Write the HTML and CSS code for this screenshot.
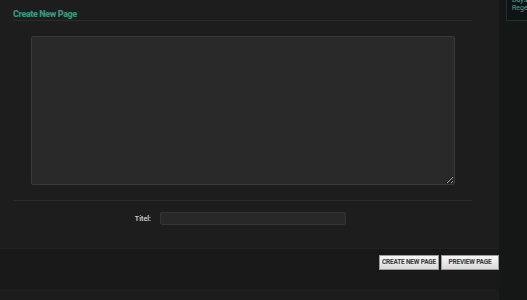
FILE: index.html
```
<!DOCTYPE html>
<html>
<head>
<meta charset="utf-8">
<link rel="stylesheet" href="styles.css">
</head>
<body>
<div class="layout">
  <div class="main">
    <div class="section">
      <h2 class="title">Create New Page</h2>
      <div class="editor-wrap">
        <textarea class="editor"></textarea>
      </div>
      <div class="form-row">
        <label class="label">Titel:</label>
        <input class="input" type="text">
      </div>
    </div>
    <div class="footer">
      <button class="btn btn-create">CREATE NEW PAGE</button>
      <button class="btn btn-preview">PREVIEW PAGE</button>
    </div>
    <div class="bottom"></div>
  </div>
  <div class="side">
    <div class="side-box">
      <div class="side-line first">Days</div>
      <div class="side-line">Regel</div>
    </div>
  </div>
</div>
</body>
</html>
```
FILE: styles.css
```
html, body {
  margin: 0;
  padding: 0;
  background: #171717;
  height: 300px;
  overflow: hidden;
}
.layout {
  display: flex;
  height: 300px;
}
.main {
  width: 499px;
  display: flex;
  flex-direction: column;
  background: #1d1d1d;
}
.section {
  padding: 0 27px 0 13px;
  height: 249px;
  border-bottom: 1px solid #222;
  box-sizing: border-box;
}
.title {
  margin: 0;
  height: 21px;
  box-sizing: border-box;
  padding-top: 9px;
  border-bottom: 1px solid #2a2a2a;
  font-family: "Roboto", sans-serif;
  font-weight: 900;
  font-size: 9px;
  letter-spacing: -0.4px;
  line-height: 10px;
  color: #3b937f;
}
.editor-wrap {
  padding: 15px 0 15px 18px;
  border-bottom: 1px solid #2c2c2c;
}
.editor {
  display: block;
  width: 424px;
  height: 149px;
  box-sizing: border-box;
  margin: 0;
  background: #292929;
  border: 1px solid #3a3a3a;
  border-radius: 2px;
  resize: both;
  outline: none;
}
.form-row {
  display: flex;
  align-items: center;
  padding-top: 11px;
}
.label {
  width: 138px;
  text-align: right;
  font-family: "Roboto", sans-serif;
  font-weight: bold;
  font-size: 7px;
  color: #c8c8c8;
  margin-right: 9px;
}
.input {
  width: 186px;
  height: 13px;
  box-sizing: border-box;
  margin: 0;
  padding: 0 4px;
  background: #282828;
  border: 1px solid #353535;
  border-radius: 2px;
  outline: none;
}
.footer {
  height: 40px;
  background: #181818;
  display: flex;
  justify-content: flex-end;
  align-items: flex-start;
  gap: 2px;
  padding-top: 6px;
  box-sizing: border-box;
}
.btn {
  height: 15px;
  margin: 0;
  padding: 0;
  background: linear-gradient(#f7f7f7, #dadada);
  border: 1px solid #9a9a9a;
  border-radius: 0;
  font-family: "Roboto", sans-serif;
  font-weight: bold;
  font-size: 6.5px;
  letter-spacing: -0.2px;
  color: #383838;
  line-height: 13px;
  white-space: nowrap;
  text-align: center;
}
.btn-create {
  width: 60px;
}
.btn-preview {
  width: 58px;
}
.bottom {
  flex: 1;
  background: #1c1c1c;
}
.side {
  flex: 1;
  display: flex;
  justify-content: flex-end;
  align-items: flex-start;
  background: #151717;
}
.side-box {
  width: 21px;
  height: 21px;
  box-sizing: border-box;
  padding-left: 5px;
  background: #0e1414;
  border-left: 1px solid #223030;
  border-bottom: 1px solid #223030;
  overflow: hidden;
  font-family: "Roboto", sans-serif;
  font-size: 7px;
  line-height: 8px;
  color: #4aa59a;
  white-space: nowrap;
}
.side-line.first {
  margin-top: -4px;
}
```
